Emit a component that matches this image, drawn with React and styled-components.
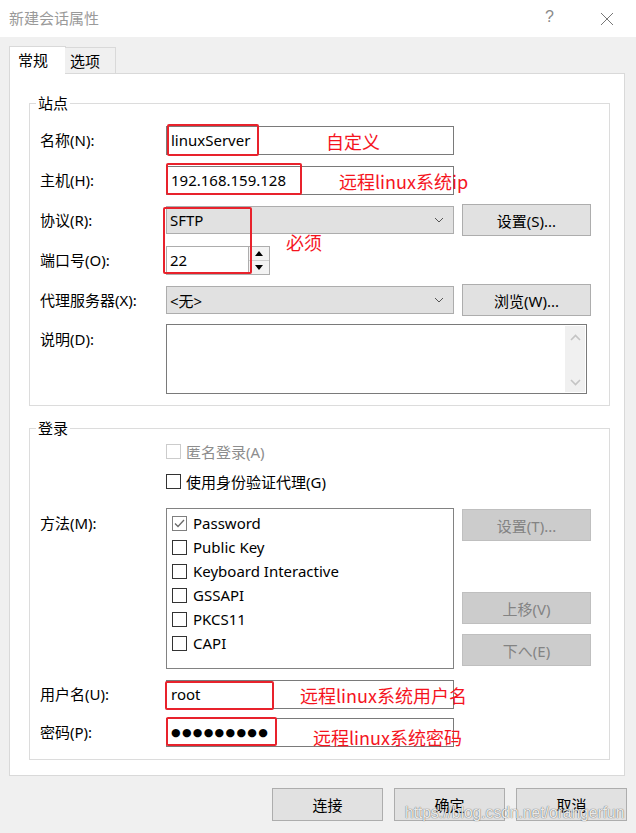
import React from "react";
import styled, { createGlobalStyle, css } from "styled-components";

const GlobalStyle = createGlobalStyle`
  html, body { margin: 0; padding: 0; background: #f0f0f0; }
  body { font-family: "Noto Sans", "Noto Sans CJK SC", sans-serif; font-size: 15px; color: #000; }
  * { box-sizing: border-box; }
`;

const Root = styled.div`
  position: relative;
  width: 636px;
  height: 833px;
  overflow: hidden;
  background: #f0f0f0;
  display: flex;
  flex-direction: column;
`;

const TitleBar = styled.div`
  height: 37px;
  background: #fff;
  display: flex;
  align-items: center;
  justify-content: space-between;
  padding: 0 22px 0 9px;
  flex: none;
`;

const Title = styled.div`
  color: #9a9a9a;
  font-size: 15px;
  line-height: 20px;
  margin-top: -2px;
`;

const TitleButtons = styled.div`
  display: flex;
  align-items: center;
  gap: 46px;
`;

const HelpGlyph = styled.span`
  font-family: "Liberation Sans", sans-serif;
  color: #8a8a8a;
  font-size: 16px;
  line-height: 20px;
  margin-top: -3px;
`;

const Body = styled.div`
  flex: 1;
  display: flex;
  flex-direction: column;
  padding: 0 9px;
`;

const TabStrip = styled.div`
  height: 37px;
  display: flex;
  align-items: flex-end;
  position: relative;
  z-index: 1;
  margin-bottom: -1px;
`;

const Tab = styled.div`
  border: 1px solid #d9d9d9;
  display: flex;
  align-items: center;
  font-size: 15px;
  line-height: 20px;
  ${(p) =>
    p.$active
      ? css`
          background: #fff;
          height: 28px;
          width: 57px;
          padding-left: 8px;
          border-bottom: none;
          padding-bottom: 1px;
        `
      : css`
          background: #f0f0f0;
          height: 26px;
          width: 51px;
          padding-left: 5px;
          margin-left: -1px;
          margin-bottom: 1px;
          border-left: none;
          border-bottom: none;
        `}
`;

const Panel = styled.div`
  background: #fff;
  border: 1px solid #d9d9d9;
  margin-right: 2px;
  padding: 29px 14px 15px 19px;
  display: flex;
  flex-direction: column;
`;

const Group = styled.div`
  border: 1px solid #dcdcdc;
  padding: 0 10px 11px 10px;
  display: flex;
  flex-direction: column;
  ${(p) => p.$spaced && css`margin-top: 22px;`}
`;

const Legend = styled.div`
  height: 20px;
  line-height: 20px;
  margin: -11px 0 0 -4px;
  padding: 0 2px;
  background: #fff;
  align-self: flex-start;
  font-size: 15px;
`;

const Rows = styled.div`
  display: flex;
  flex-direction: column;
  gap: 8px;
  margin-top: ${(p) => p.$top || 0}px;
`;

const Row = styled.div`
  display: grid;
  grid-template-columns: 118px 288px 129px;
  column-gap: 8px;
  height: ${(p) => p.$h || 32}px;
  align-items: ${(p) => (p.$top ? "start" : "center")};
  margin-top: ${(p) => p.$mt || 0}px;
`;

const Label = styled.div`
  font-size: 15px;
  line-height: 20px;
  white-space: nowrap;
  ${(p) => p.$pad && css`padding-top: ${p.$pad}px;`}
`;

const TextBox = styled.div`
  height: 29px;
  border: 1px solid #7a7a7a;
  background: #fff;
  display: flex;
  align-items: center;
  padding-left: 4px;
  font-size: 15px;
  white-space: nowrap;
`;

const Dots = styled.span`
  font-family: "DejaVu Sans", sans-serif;
  font-size: 11px;
  letter-spacing: 1.3px;
  margin-top: 1px;
`;

const Select = styled.div`
  height: 28px;
  border: 1px solid #adadad;
  background: #e1e1e1;
  display: flex;
  align-items: center;
  justify-content: space-between;
  padding: 0 9px 0 3px;
  font-size: 15px;
`;

const Button = styled.div`
  height: ${(p) => p.$h || 32}px;
  width: ${(p) => (p.$w ? `${p.$w}px` : "auto")};
  border: 1px solid ${(p) => (p.$disabled ? "#bfbfbf" : "#adadad")};
  background: ${(p) => (p.$disabled ? "#cccccc" : "#e1e1e1")};
  color: ${(p) => (p.$disabled ? "#838383" : "#000")};
  display: flex;
  align-items: center;
  justify-content: center;
  font-size: 15px;
  ${(p) => p.$push && css`margin-top: auto;`}
`;

const Spinner = styled.div`
  width: 104px;
  height: 29px;
  display: flex;
  border: 1px solid #adadad;
  background: #fff;
`;

const SpinText = styled.div`
  flex: 1;
  display: flex;
  align-items: center;
  padding-left: 3px;
  border-right: 1px solid #adadad;
`;

const SpinButtons = styled.div`
  width: 20px;
  display: flex;
  flex-direction: column;
`;

const SpinHalf = styled.div`
  flex: 1;
  display: flex;
  align-items: center;
  justify-content: center;
  background: #f3f3f3;
  ${(p) => p.$top && css`border-bottom: 1px solid #cdcdcd;`}
`;

const TextArea = styled.div`
  width: 421px;
  height: 70px;
  border: 1px solid #7a7a7a;
  background: #fff;
  display: flex;
  justify-content: flex-end;
  padding: 1px;
  grid-column: 2 / span 2;
`;

const ScrollTrack = styled.div`
  width: 20px;
  background: #f0f0f0;
  display: flex;
  flex-direction: column;
  justify-content: space-between;
  align-items: center;
  padding: 8px 0 6px;
`;

const CheckRow = styled.div`
  display: flex;
  align-items: center;
  gap: 5px;
  height: 27px;
  padding-left: 126px;
  margin-top: ${(p) => p.$mt || 0}px;
  color: ${(p) => (p.$disabled ? "#8d8d8d" : "#000")};
  font-size: 15px;
`;

const Box = styled.span`
  width: 15px;
  height: 15px;
  border: 1px solid ${(p) => (p.$disabled ? "#cccccc" : p.$soft ? "#7f7f7f" : "#333")};
  background: #fff;
  display: inline-flex;
  align-items: center;
  justify-content: center;
  flex: none;
`;

const List = styled.div`
  height: 161px;
  border: 1px solid #828282;
  background: #fff;
  padding: 2px 0 0 5px;
  display: flex;
  flex-direction: column;
`;

const ListItem = styled.div`
  height: 24px;
  display: flex;
  align-items: center;
  gap: 6px;
  font-size: 15px;
  white-space: nowrap;
`;

const SideButtons = styled.div`
  height: 161px;
  display: flex;
  flex-direction: column;
  gap: 10px;
  padding: 1px 0 3px;
`;

const Footer = styled.div`
  margin-top: 12px;
  display: flex;
  justify-content: flex-end;
  gap: 11px;
`;

const Mark = styled.div`
  position: absolute;
  border: 2.5px solid #e8222c;
  border-radius: 2px;
  pointer-events: none;
`;

const Note = styled.div`
  position: absolute;
  color: #f5141e;
  font-family: "Noto Sans CJK SC", "Noto Sans", sans-serif;
  font-size: 18px;
  line-height: 24px;
  white-space: nowrap;
  pointer-events: none;
`;

const Watermark = styled.div`
  position: absolute;
  left: 405px;
  top: 803px;
  font-family: "Liberation Sans", Arial, sans-serif;
  font-size: 15.6px;
  line-height: 20px;
  color: rgba(255, 255, 255, 0.9);
  text-shadow: 0 0 1px rgba(0, 0, 0, 0.55), 0 0 1px rgba(0, 0, 0, 0.35);
  white-space: nowrap;
  pointer-events: none;
`;

const Chevron = ({ color = "#555" }) => (
  <svg width="10" height="6" viewBox="0 0 10 6">
    <path d="M1 1 L5 5 L9 1" fill="none" stroke={color} strokeWidth="1" />
  </svg>
);

const ScrollArrow = ({ up }) => (
  <svg width="11" height="7" viewBox="0 0 11 7">
    <path d={up ? "M1 6 L5.5 1.5 L10 6" : "M1 1 L5.5 5.5 L10 1"} fill="none" stroke="#c4c4c4" strokeWidth="1.6" />
  </svg>
);

const Tri = ({ up }) => (
  <svg width="8" height="5" viewBox="0 0 8 5">
    <path d={up ? "M0 5 L4 0 L8 5 Z" : "M0 0 L8 0 L4 5 Z"} fill="#000" />
  </svg>
);

const Check = () => (
  <svg width="11" height="9" viewBox="0 0 11 9">
    <path d="M1 4.5 L4 7.5 L10 1" fill="none" stroke="#6a6a6a" strokeWidth="1.3" />
  </svg>
);

const CloseIcon = () => (
  <svg width="14" height="14" viewBox="0 0 14 14">
    <path d="M1 1 L13 13 M13 1 L1 13" stroke="#777" strokeWidth="1" />
  </svg>
);

const methods = [
  { name: "Password", checked: true },
  { name: "Public Key" },
  { name: "Keyboard Interactive" },
  { name: "GSSAPI" },
  { name: "PKCS11" },
  { name: "CAPI" },
];

export default function App() {
  return (
    <Root>
      <GlobalStyle />
      <TitleBar>
        <Title>新建会话属性</Title>
        <TitleButtons>
          <HelpGlyph>?</HelpGlyph>
          <CloseIcon />
        </TitleButtons>
      </TitleBar>
      <Body>
        <TabStrip>
          <Tab $active>常规</Tab>
          <Tab>选项</Tab>
        </TabStrip>
        <Panel>
          <Group>
            <Legend>站点</Legend>
            <Rows $top={11}>
              <Row>
                <Label>名称(N):</Label>
                <TextBox>linuxServer</TextBox>
              </Row>
              <Row>
                <Label>主机(H):</Label>
                <TextBox>192.168.159.128</TextBox>
              </Row>
              <Row>
                <Label>协议(R):</Label>
                <Select>
                  SFTP
                  <Chevron />
                </Select>
                <Button>设置(S)...</Button>
              </Row>
              <Row>
                <Label>端口号(O):</Label>
                <Spinner>
                  <SpinText>22</SpinText>
                  <SpinButtons>
                    <SpinHalf $top>
                      <Tri up />
                    </SpinHalf>
                    <SpinHalf>
                      <Tri />
                    </SpinHalf>
                  </SpinButtons>
                </Spinner>
              </Row>
              <Row>
                <Label>代理服务器(X):</Label>
                <Select>
                  {"<无>"}
                  <Chevron />
                </Select>
                <Button>浏览(W)...</Button>
              </Row>
              <Row $h={70} $top>
                <Label $pad={5}>说明(D):</Label>
                <TextArea>
                  <ScrollTrack>
                    <ScrollArrow up />
                    <ScrollArrow />
                  </ScrollTrack>
                </TextArea>
              </Row>
            </Rows>
          </Group>

          <Group $spaced>
            <Legend>登录</Legend>
            <CheckRow $disabled>
              <Box $disabled />
              匿名登录(A)
            </CheckRow>
            <CheckRow $mt={3}>
              <Box />
              使用身份验证代理(G)
            </CheckRow>
            <Row $h={161} $top $mt={13}>
              <Label $pad={5}>方法(M):</Label>
              <List>
                {methods.map((m) => (
                  <ListItem key={m.name}>
                    <Box $soft={m.checked}>{m.checked && <Check />}</Box>
                    {m.name}
                  </ListItem>
                ))}
              </List>
              <SideButtons>
                <Button $disabled>设置(T)...</Button>
                <Button $disabled $push>
                  上移(V)
                </Button>
                <Button $disabled>下へ(E)</Button>
              </SideButtons>
            </Row>
            <Row $mt={9}>
              <Label>用户名(U):</Label>
              <TextBox>root</TextBox>
            </Row>
            <Row $mt={6}>
              <Label>密码(P):</Label>
              <TextBox>
                <Dots>●●●●●●●●●</Dots>
              </TextBox>
            </Row>
          </Group>
        </Panel>
        <Footer>
          <Button $w={111} $h={33}>连接</Button>
          <Button $w={111} $h={33}>确定</Button>
          <Button $w={111} $h={33}>取消</Button>
        </Footer>
      </Body>

      <Mark style={{ left: 167, top: 124, width: 92, height: 32 }} />
      <Mark style={{ left: 166, top: 163, width: 136, height: 32 }} />
      <Mark style={{ left: 163, top: 207, width: 89, height: 67 }} />
      <Mark style={{ left: 165, top: 681, width: 109, height: 29 }} />
      <Mark style={{ left: 166, top: 717, width: 111, height: 29 }} />

      <Note style={{ left: 326, top: 129 }}>自定义</Note>
      <Note style={{ left: 339, top: 169 }}>远程linux系统ip</Note>
      <Note style={{ left: 286, top: 230 }}>必须</Note>
      <Note style={{ left: 300, top: 683 }}>远程linux系统用户名</Note>
      <Note style={{ left: 313, top: 725 }}>远程linux系统密码</Note>

      <Watermark>https://blog.csdn.net/orangerfun</Watermark>
    </Root>
  );
}
